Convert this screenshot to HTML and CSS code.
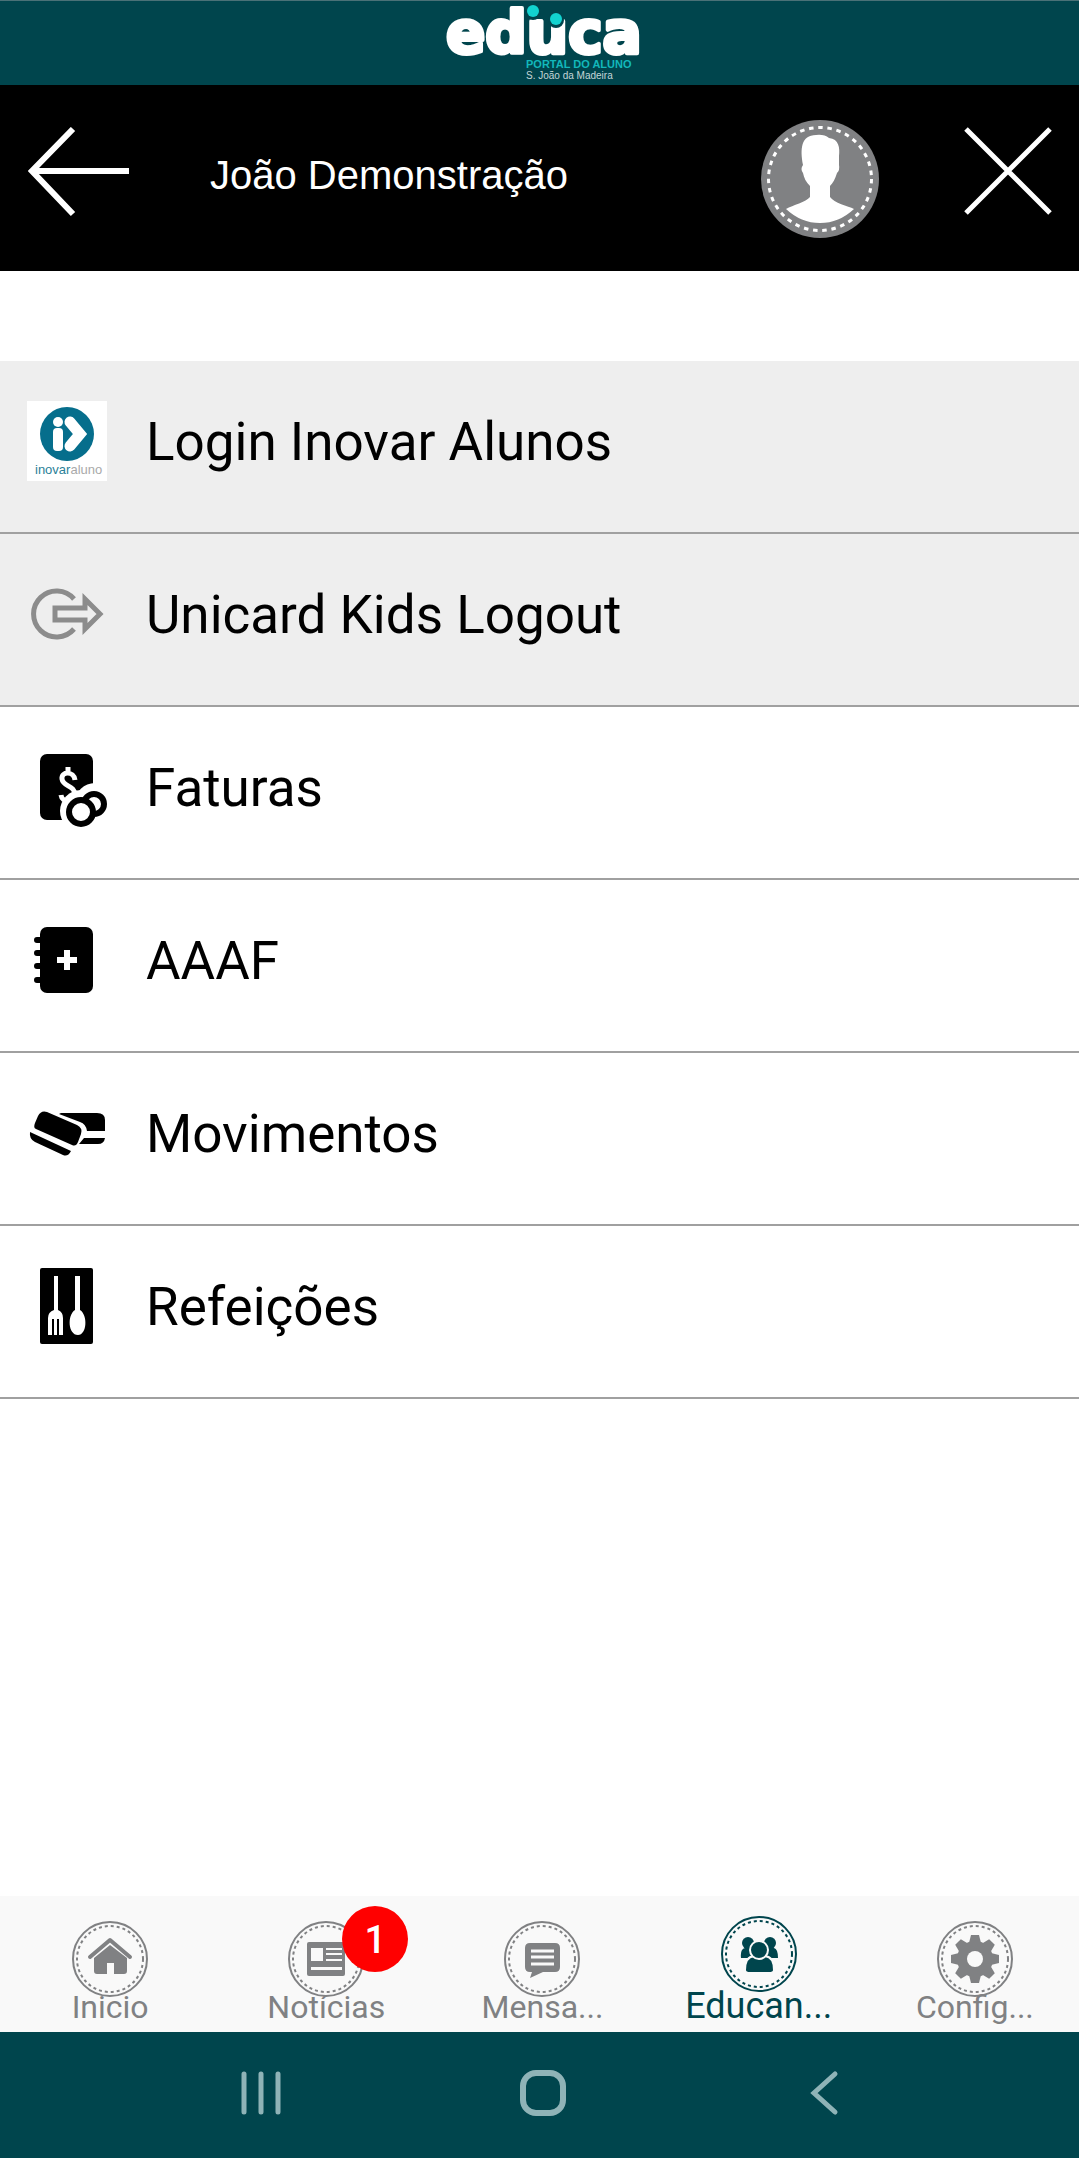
FILE: index.html
```html
<!DOCTYPE html>
<html lang="pt">
<head>
<meta charset="utf-8">
<meta name="viewport" content="width=device-width, initial-scale=1">
<title>Educa - Portal do Aluno</title>
<link rel="stylesheet" href="styles.css">
</head>
<body>
<div class="app">
  <div class="brand">
    <svg class="brand-logo" viewBox="0 0 240 84" role="img" aria-label="educa, Portal do Aluno, S. João da Madeira">
      <text class="brand-name" x="26" y="52">educa</text>
      <g fill="#00454d"><circle cx="113" cy="11" r="8"/><circle cx="136" cy="19" r="8"/></g>
      <g fill="#12d3d0"><circle cx="113" cy="10" r="6"/><circle cx="136" cy="18" r="6"/></g>
      <text class="brand-sub" x="106" y="67">PORTAL DO ALUNO</text>
      <text class="brand-place" x="106" y="78">S. João da Madeira</text>
    </svg>
  </div>

  <header class="header">
    <button class="icon-button back" type="button" aria-label="Voltar">
      <svg width="102" height="90" viewBox="0 0 102 90" fill="none" stroke="#fff" stroke-width="6"><path d="M45 2 4 44 45 87M3 44H101"/></svg>
    </button>
    <h1 class="title">João Demonstração</h1>
    <svg class="avatar" viewBox="0 0 120 120" aria-hidden="true">
      <circle cx="60" cy="60" r="59" fill="#808183"/>
      <circle cx="60" cy="60" r="51.5" fill="none" stroke="#fff" stroke-width="3" stroke-dasharray="4.5 4.75"/>
      <path fill="#fff" d="M43 46C40 30 41 16 56 16Q64 15 69 19C79 20 80 29 79 37V46Q80 51 77 54C75 60 73 64 70 67V78C74 84 88 87 94 90Q79 104 60 104 41 104 26 90C33 86 46 83 50 78V67C46 63 44 59 43 54Q40 50 43 46Z"/>
    </svg>
    <button class="icon-button close" type="button" aria-label="Fechar">
      <svg width="88" height="88" viewBox="0 0 88 88" stroke="#fff" stroke-width="5"><path d="M2 2 86 86M86 2 2 86"/></svg>
    </button>
  </header>

  <main class="content">
    <nav class="menu" aria-label="Opções">
      <a class="row shaded" href="#inovar">
        <svg class="row-icon" viewBox="0 0 80 80" aria-hidden="true">
          <rect width="80" height="80" fill="#fff"/>
          <circle cx="40" cy="33" r="27" fill="#066e8c"/>
          <g fill="#fff"><circle cx="31" cy="21" r="5"/><rect x="26" y="27" width="10" height="23" rx="4"/></g>
          <path d="M43 21 53 33 43 45" fill="none" stroke="#fff" stroke-width="11" stroke-linecap="round"/>
          <text class="inovar-text" x="8" y="73">inovar<tspan class="inovar-light">aluno</tspan></text>
        </svg>
        <span class="row-label">Login Inovar Alunos</span>
      </a>
      <a class="row shaded" href="#logout">
        <svg class="row-icon" viewBox="0 0 80 80" fill="none" stroke="#8c8c8c" stroke-width="5" aria-hidden="true">
          <path d="M47 25A23 23 0 1 0 47 55"/><path d="M28 34H58V25L73 40 58 55V46H28Z"/>
        </svg>
        <span class="row-label">Unicard Kids Logout</span>
      </a>
      <a class="row" href="#faturas">
        <svg class="row-icon" viewBox="0 0 80 80" aria-hidden="true">
          <rect x="13" y="7" width="53" height="66" rx="7"/>
          <path d="M41 20V26M48 33C47 24 34 24 35 32 36 40 48 38 48 48 47 56 35 56 34 48" fill="none" stroke="#fff" stroke-width="5"/>
          <circle cx="68" cy="56" r="20" fill="#fff"/><circle cx="54" cy="64" r="21" fill="#fff"/>
          <circle cx="67" cy="57" r="10" fill="#fff" stroke="#000" stroke-width="6"/>
          <circle cx="54" cy="65" r="12" fill="#fff" stroke="#000" stroke-width="6"/>
        </svg>
        <span class="row-label">Faturas</span>
      </a>
      <a class="row" href="#aaaf">
        <svg class="row-icon" viewBox="0 0 80 80" aria-hidden="true">
          <rect x="13" y="7" width="53" height="66" rx="7"/>
          <path d="M10 20H16M10 33H16M10 46H16M10 60H16" stroke="#000" stroke-width="6" stroke-linecap="round"/>
          <path d="M40 30V50M30 40H50" stroke="#fff" stroke-width="6"/>
        </svg>
        <span class="row-label">AAAF</span>
      </a>
      <a class="row" href="#movimentos">
        <svg class="row-icon" viewBox="0 0 80 80" aria-hidden="true">
          <g transform="translate(0 -4)">
            <path d="M34 24H70Q78 24 78 31V42H60Q59 35 53 33L32 25ZM57 49H78Q77 55 71 55H52Z"/>
            <path d="M20 23 50 36Q56 39 54 45L51 53Q49 58 45 56L9 40Q6 39 8 34L11 27Q14 21 20 23ZM3 43 44 62Q41 68 36 66L8 53Q2 50 3 43Z"/>
          </g>
        </svg>
        <span class="row-label">Movimentos</span>
      </a>
      <a class="row" href="#refeicoes">
        <svg class="row-icon" viewBox="0 0 80 80" aria-hidden="true">
          <rect x="13" y="2" width="53" height="76" rx="2"/>
          <g fill="#fff"><path d="M27 10H31V44Q36 46 36 52V69H21V52Q21 46 27 44Z"/><path d="M48 10H53V44C61 49 60 69 51 69 41 69 40 49 48 44Z"/></g>
          <path d="M26 53V70M31 53V70" stroke="#000" stroke-width="2"/>
        </svg>
        <span class="row-label">Refeições</span>
      </a>
    </nav>
  </main>

  <nav class="tabs" aria-label="Principal">
    <a class="tab" href="#inicio">
      <svg class="tab-icon" viewBox="0 0 76 76" aria-hidden="true">
        <circle class="ring" cx="38" cy="38" r="37"/><circle class="dashes" cx="38" cy="38" r="33"/>
        <path d="M18 36 38 19 58 36" fill="none" stroke="currentColor" stroke-width="4" stroke-linecap="round" stroke-linejoin="round"/>
        <path d="M22 37 38 24 55 37V50Q55 53 52 53H42V42H35V53H25Q22 53 22 50Z" fill="currentColor"/>
      </svg>
      <span class="tab-label">Inicio</span>
    </a>
    <a class="tab" href="#noticias">
      <svg class="tab-icon" viewBox="0 0 76 76" aria-hidden="true">
        <circle class="ring" cx="38" cy="38" r="37"/><circle class="dashes" cx="38" cy="38" r="33"/>
        <rect x="19" y="21" width="38" height="34" rx="2" fill="currentColor"/>
        <path d="M23 27H35V40H23ZM38 27H54V29H38ZM38 32H54V34H38ZM38 38H54V40H38ZM23 46H54V49H23Z" fill="#f9f9f9"/>
      </svg>
      <span class="tab-label">Notícias</span>
      <span class="badge">1</span>
    </a>
    <a class="tab" href="#mensagens">
      <svg class="tab-icon" viewBox="0 0 76 76" aria-hidden="true">
        <circle class="ring" cx="38" cy="38" r="37"/><circle class="dashes" cx="38" cy="38" r="33"/>
        <path d="M26 22H51Q56 22 56 27V46Q56 51 51 51H39L26 57 28 51H26Q21 51 21 46V27Q21 22 26 22Z" fill="currentColor"/>
        <path d="M27 30H50M27 36H50M27 43H50" stroke="#f9f9f9" stroke-width="3"/>
      </svg>
      <span class="tab-label">Mensa...</span>
    </a>
    <a class="tab active" href="#educandos" aria-current="page">
      <svg class="tab-icon" viewBox="0 0 76 76" aria-hidden="true">
        <circle class="ring" cx="38" cy="38" r="37"/><circle class="dashes" cx="38" cy="38" r="33"/>
        <g fill="currentColor"><circle cx="27" cy="27" r="6"/><circle cx="49" cy="27" r="6"/><path d="M24 32H33V42H20Q19 33 24 32ZM43 32H53Q57 33 57 42H43Z"/></g>
        <g fill="currentColor" stroke="#f9f9f9" stroke-width="2"><path d="M33 40H44Q53 41 53 54 53 57 48 57H29Q24 57 24 54 24 41 33 40Z"/><circle cx="38" cy="34" r="9"/></g>
      </svg>
      <span class="tab-label">Educan...</span>
    </a>
    <a class="tab" href="#config">
      <svg class="tab-icon" viewBox="0 0 76 76" aria-hidden="true">
        <circle class="ring" cx="38" cy="38" r="37"/><circle class="dashes" cx="38" cy="38" r="33"/>
        <g fill="currentColor"><circle cx="38" cy="38" r="18"/>
          <path id="tooth" d="M32 22 34 14H42L44 22V54L42 62H34L32 54Z"/>
          <use href="#tooth" transform="rotate(45 38 38)"/><use href="#tooth" transform="rotate(90 38 38)"/><use href="#tooth" transform="rotate(135 38 38)"/>
        </g>
        <circle cx="38" cy="38" r="8" fill="#f9f9f9"/>
      </svg>
      <span class="tab-label">Config...</span>
    </a>
  </nav>

  <div class="system-bar">
    <button class="icon-button" type="button" aria-label="Recentes"><svg width="48" height="48" viewBox="0 0 48 48" fill="none" stroke="#8fb3b7" stroke-width="5" stroke-linecap="round"><path d="M6 5V43M23 5V43M40 5V43"/></svg></button>
    <button class="icon-button" type="button" aria-label="Ecrã inicial"><svg width="48" height="48" viewBox="0 0 48 48" fill="none" stroke="#8fb3b7" stroke-width="6"><rect x="4" y="4" width="40" height="40" rx="13"/></svg></button>
    <button class="icon-button" type="button" aria-label="Retroceder"><svg width="48" height="48" viewBox="0 0 48 48" fill="none" stroke="#8fb3b7" stroke-width="5" stroke-linecap="round"><path d="M35 5 14 24 35 43"/></svg></button>
  </div>
</div>
</body>
</html>
```
FILE: styles.css
```css
* { box-sizing: border-box; }

body {
  margin: 0;
  background: #fff;
  color: #000;
  font-family: Roboto, "Liberation Sans", sans-serif;
}

.app {
  display: flex;
  flex-direction: column;
  min-height: 100vh;
}

a { color: inherit; text-decoration: none; }

.icon-button {
  display: flex;
  padding: 0;
  border: 0;
  background: none;
}

.brand {
  display: flex;
  justify-content: center;
  height: 85px;
  border-top: 1px solid #4a7177;
  background: #00454d;
}

.brand-logo {
  width: 240px;
  height: 84px;
}

.brand-name {
  font: 700 58px "DejaVu Sans", sans-serif;
  fill: #fff;
  stroke: #fff;
  stroke-width: 4px;
  stroke-linejoin: round;
}

.brand-sub {
  font: 700 11px "Liberation Sans", sans-serif;
  fill: #12b8bb;
}

.brand-place {
  font: 400 10px "Liberation Sans", sans-serif;
  fill: #c4d5d7;
}

.header {
  display: flex;
  align-items: flex-start;
  padding: 34px 27px 0 28px;
  height: 186px;
  background: #000;
}

.back { margin-top: 8px; }

.title {
  flex: 1;
  margin: 28px 0 0 80px;
  color: #fff;
  font: 400 40px/56px "Liberation Sans", sans-serif;
}

.avatar { width: 120px; height: 120px; }

.close { margin: 8px 0 0 84px; }

.content {
  flex: 1;
  padding-top: 90px;
}

.menu {
  display: flex;
  flex-direction: column;
}

.row {
  display: flex;
  gap: 39px;
  padding: 40px 28px 0 27px;
  height: 173px;
  border-bottom: 2px solid #a0a0a0;
}

.shaded { background: #eee; }

.row-icon { width: 80px; height: 80px; }

.row-label {
  font-size: 53px;
  line-height: 82px;
}

.inovar-text {
  font: 400 13px "Liberation Sans", sans-serif;
  fill: #2b7f98;
}

.inovar-light { fill: #a9a9a9; }

.tabs {
  display: grid;
  grid-template-columns: repeat(5, minmax(0, 1fr));
  gap: 8px;
  padding-left: 6px;
  height: 136px;
  background: #f9f9f9;
  color: #808183;
}

.tab {
  position: relative;
  display: flex;
  flex-direction: column;
  align-items: center;
  padding-top: 25px;
  font-size: 32px;
  line-height: 40px;
}

.tab-icon { width: 76px; height: 76px; }

.ring,
.dashes {
  fill: none;
  stroke: currentColor;
}

.ring { stroke-width: 2; }

.dashes {
  stroke-width: 2;
  stroke-dasharray: 3 3;
}

.tab-label {
  margin-top: -10px;
  white-space: nowrap;
}

.active {
  padding-top: 20px;
  color: #00454d;
  font-size: 36px;
}

.active .tab-label { margin-top: -6px; }

.badge {
  position: absolute;
  top: 10px;
  left: 120px;
  width: 66px;
  height: 66px;
  border-radius: 50%;
  background: #f00;
  color: #fff;
  font-size: 38px;
  font-weight: 500;
  line-height: 68px;
  text-align: center;
}

.system-bar {
  display: flex;
  align-items: center;
  justify-content: space-between;
  padding: 0 231px 4px 238px;
  height: 126px;
  background: #00454d;
}
```
